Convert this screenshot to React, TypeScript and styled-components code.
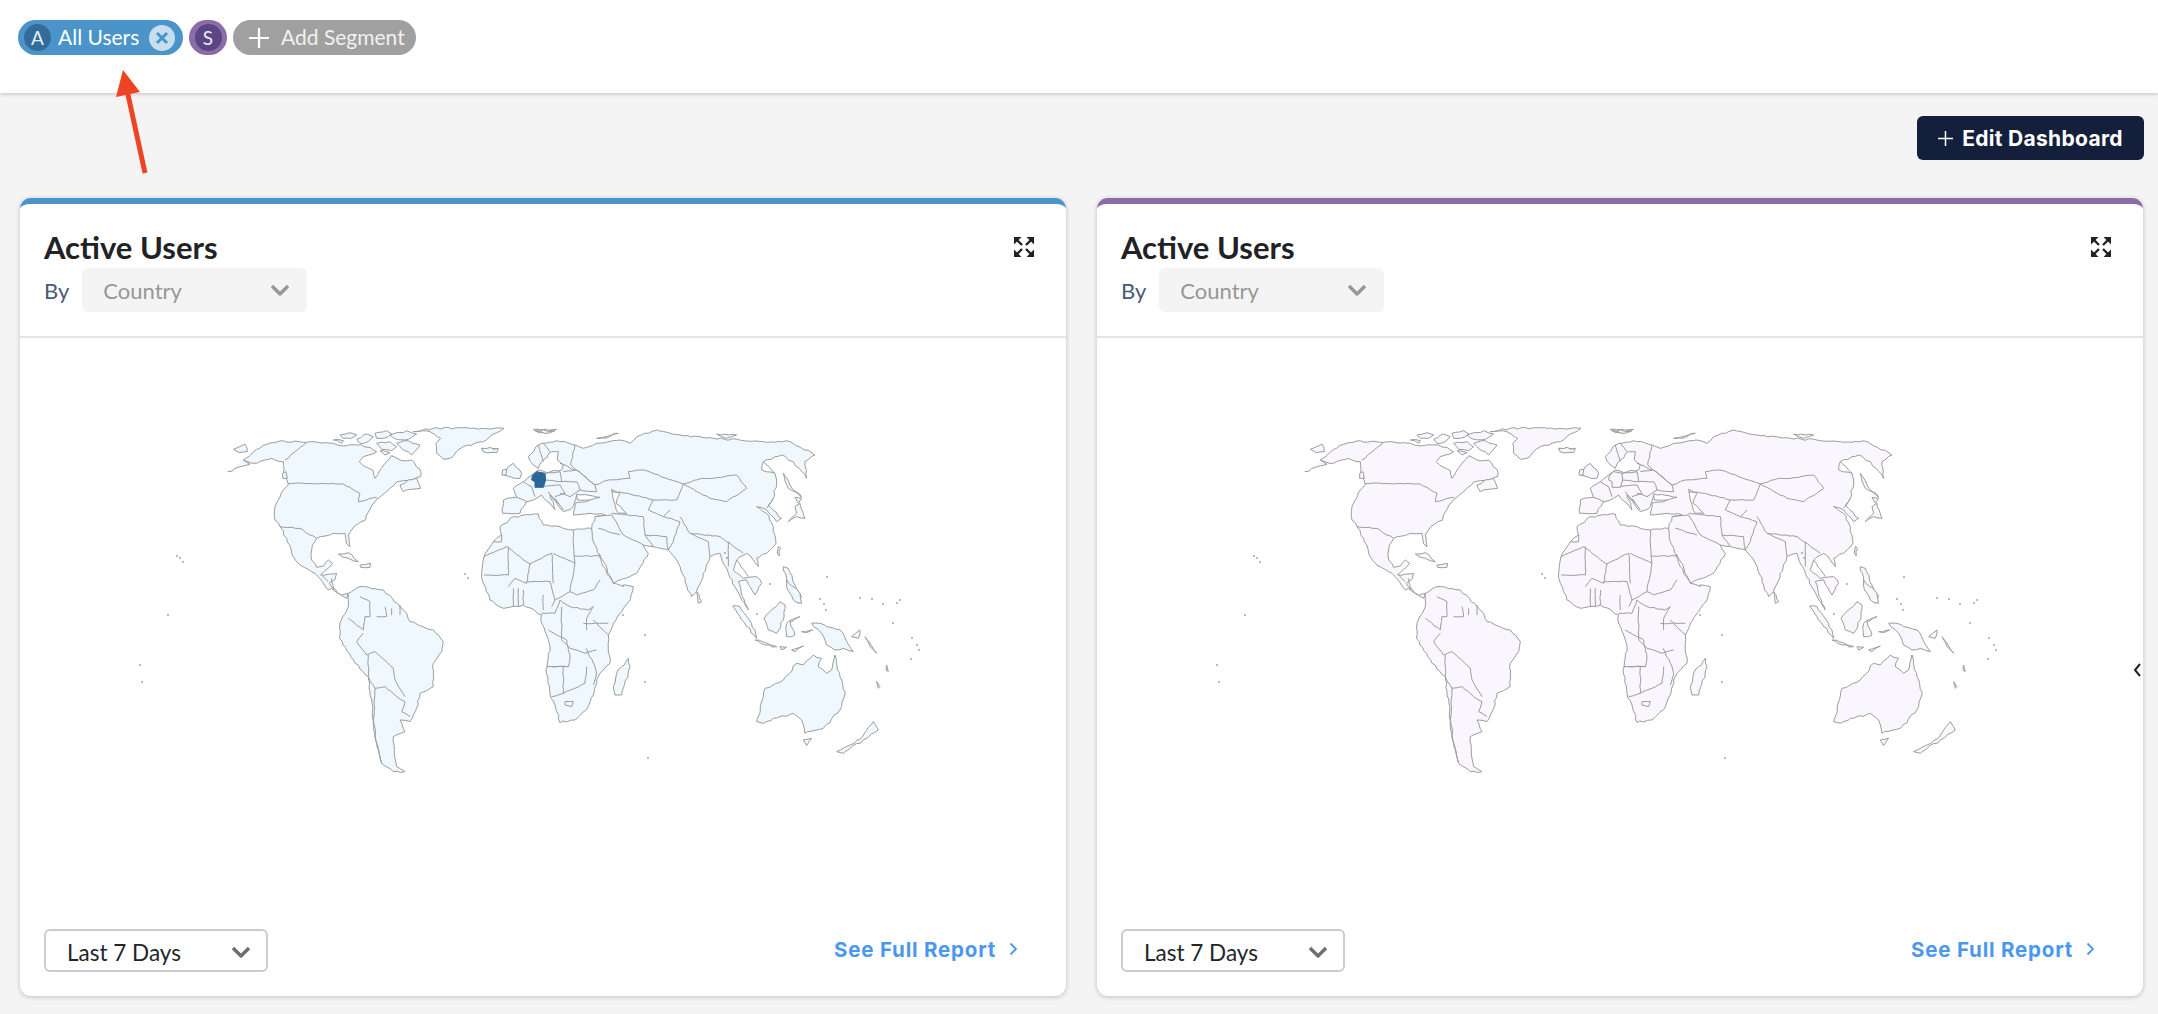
import * as React from 'react'
import styled, { createGlobalStyle } from 'styled-components'

const GlobalStyle = createGlobalStyle`
  html, body {
    margin: 0;
    padding: 0;
    background: #f4f4f4;
    font-family: 'Lato', 'Noto Sans', sans-serif;
    overflow: hidden;
  }
`

const Page = styled.div`
  position: relative;
  width: 2158px;
  height: 1014px;
`

const TopBar = styled.div`
  display: flex;
  align-items: flex-start;
  gap: 6px;
  height: 93px;
  box-sizing: border-box;
  padding: 20px 18px;
  background: #fff;
  box-shadow: 0 1px 4px rgba(0, 0, 0, 0.22);
`

const Pill = styled.div<{ $bg: string }>`
  display: flex;
  align-items: center;
  height: 35px;
  border-radius: 18px;
  background: ${(p) => p.$bg};
  color: #fff;
  font-size: 21px;
  box-sizing: border-box;
`

const SegmentPill = styled(Pill)`
  width: 165px;
  padding: 0 8px 0 6px;
`

const SegmentCollapsed = styled(Pill)`
  width: 38px;
  justify-content: center;
`

const AddPill = styled(Pill)`
  width: 183px;
  padding-left: 16px;
  color: #f1f1f1;
`

const Initial = styled.span<{ $bg: string }>`
  display: flex;
  align-items: center;
  justify-content: center;
  width: 27px;
  height: 27px;
  border-radius: 50%;
  background: ${(p) => p.$bg};
  color: #e8eef4;
  font-size: 19px;
`

const PillLabel = styled.span`
  flex: 1;
  margin-left: 7px;
  padding-bottom: 2px;
`

const CloseDot = styled.span`
  display: flex;
  align-items: center;
  justify-content: center;
  width: 26px;
  height: 26px;
  border-radius: 50%;
  background: #c7deef;
`

const AddLabel = styled.span`
  margin-left: 12px;
  padding-bottom: 2px;
`

const Toolbar = styled.div`
  display: flex;
  justify-content: flex-end;
  padding: 23px 14px 38px 0;
`

const EditButton = styled.button`
  display: flex;
  align-items: center;
  justify-content: center;
  gap: 9px;
  width: 227px;
  height: 44px;
  border: none;
  border-radius: 6px;
  background: #141f3b;
  color: #fff;
  font-family: 'Inter', sans-serif;
  font-size: 21px;
  font-weight: 700;
  letter-spacing: 0.3px;
`

const Cards = styled.div`
  display: flex;
  gap: 31px;
  padding-left: 20px;
`

const Card = styled.section<{ $accent: string }>`
  display: flex;
  flex-direction: column;
  width: 1046px;
  height: 798px;
  box-sizing: border-box;
  border-top: 6px solid ${(p) => p.$accent};
  border-radius: 11px;
  background: #fff;
  box-shadow: 0 1px 5px rgba(0, 0, 0, 0.22);
`

const CardHeader = styled.header`
  display: flex;
  justify-content: space-between;
  height: 134px;
  box-sizing: border-box;
  padding: 24px 32px 0 24px;
  border-bottom: 2px solid #e4e4e4;
`

const Title = styled.h2`
  margin: 0;
  color: #212226;
  font-size: 31px;
  line-height: 38px;
  font-weight: 700;
`

const ByRow = styled.div`
  display: flex;
  align-items: center;
  gap: 13px;
  margin-top: 2px;
  color: #4a5a75;
  font-size: 22px;
`

const SelectBox = styled.div`
  display: flex;
  align-items: center;
  justify-content: space-between;
  width: 225px;
  height: 44px;
  box-sizing: border-box;
  padding: 0 17px 0 21px;
  border-radius: 6px;
  background: #f4f4f4;
  color: #979797;
  font-size: 22px;
`

const ExpandIcon = styled.svg`
  width: 20px;
  height: 20px;
  margin-top: 9px;
`

const MapFrame = styled.svg`
  display: block;
  flex: 1;
  width: 100%;
  min-height: 0;
`

const CardFooter = styled.footer`
  display: flex;
  align-items: flex-start;
  justify-content: space-between;
  height: 67px;
  padding: 0 48px 0 24px;
`

const RangeSelect = styled.div`
  display: flex;
  align-items: center;
  justify-content: space-between;
  width: 224px;
  height: 43px;
  box-sizing: border-box;
  padding: 3px 15px 0 21px;
  border: 2px solid #c9ccd8;
  border-radius: 6px;
  color: #24252a;
  font-size: 22.500px;
`

const ReportLink = styled.a`
  display: flex;
  align-items: center;
  gap: 13px;
  height: 40px;
  color: #4a98ee;
  font-family: 'Inter', sans-serif;
  font-size: 20.500px;
  font-weight: 700;
  letter-spacing: 0.8px;
`

const Annotation = styled.svg`
  position: absolute;
  left: 100px;
  top: 60px;
  width: 60px;
  height: 120px;
`

const EdgeChevron = styled.svg`
  position: absolute;
  left: 2132px;
  top: 662px;
  width: 10px;
  height: 16px;
`

const Dropdown: React.FC<{ color: string; size?: number }> = ({ color, size = 20 }) => (
  <svg width={size} height={size * 0.7} viewBox="0 0 20 14">
    <path d="M2 3l8 8 8-8" fill="none" stroke={color} strokeWidth="3.4" strokeLinejoin="round" />
  </svg>
)

// the coastlines are traced coarse, this breaks long segments into a ragged line
const rough = (d: string, amp: number, seedStart: number) => {
  let seed = seedStart
  const next = () => {
    seed = (seed * 9301 + 49297) % 233280
    return seed / 233280 - 0.5
  }
  let out = ''
  let px = 0
  let py = 0
  let sx = 0
  let sy = 0
  const walk = (x: number, y: number) => {
    const steps = Math.max(1, Math.floor(Math.hypot(x - px, y - py) / 11))
    for (let i = 1; i < steps; i++) {
      const t = i / steps
      out += `L${(px + (x - px) * t + next() * amp).toFixed(1)} ${(py + (y - py) * t + next() * amp).toFixed(1)}`
    }
    out += `L${x} ${y}`
    px = x
    py = y
  }
  for (const m of d.matchAll(/([MLZ])([^MLZ]*)/g)) {
    const [x, y] = m[2].trim().split(/\s+/).map(Number)
    if (m[1] === 'M') {
      out += `M${x} ${y}`
      px = sx = x
      py = sy = y
    } else if (m[1] === 'L') {
      walk(x, y)
    } else {
      walk(sx, sy)
      out += 'Z'
    }
  }
  return out
}

// z3 block: 3x around (200,410), z4 block: 3x around (480,410)
const AMERICAS = [
  'M83 185L130 168L150 163L130 150L148 138L170 118L200 103L240 93L320 97L400 100L430 108L470 105L510 112L530 125L490 140L478 155L500 172L520 182L525 205L540 180L555 160L575 137L600 150L635 150L660 178L662 200L640 208L610 212L590 216L565 240L530 268L510 298L497 330L462 350L445 375L450 410L440 402L435 370L400 370L350 385L335 420L335 450L350 472L370 468L385 450L398 460L380 478L362 495L410 490L405 508L388 520L412 548L440 565L445 550L425 555L395 535L385 540L345 490L300 465L280 440L260 385L240 350L225 330L225 290L250 240L265 225L255 200L250 155L215 145L170 160L130 150',
  // South America
  'M445 550L480 530L550 540L620 610L630 635L700 660L730 695L725 725L700 760L700 830L660 850L650 895L630 935L600 930L615 965L580 980L585 1045L590 1070L615 1085L580 1085L545 1060L530 1000L505 800L465 760L418 685L420 640L445 590Z',
  // Greenland
  'M640 65L700 55L912 55L880 72L850 95L790 110L750 145L730 148L710 130L708 100L722 85L690 65Z',
  // Arctic islands
  'M420 75L450 68L470 75L455 85L430 85Z',
  'M470 88L500 72L520 80L505 95L480 100Z',
  'M525 70L560 62L575 72L550 85L530 85Z',
  'M570 75L620 62L650 72L625 88L590 88Z',
  'M590 100L625 92L660 105L635 135L610 120Z',
  'M530 100L570 95L590 110L575 122L545 118Z',
  'M540 122L570 128L555 135Z',
  'M400 90L430 92L425 100Z',
  'M600 225L625 210L650 205L662 235L635 238L610 245Z',
  'M845 115L892 115L885 128L850 125Z',
  'M415 432L445 428L475 455L445 445Z',
  'M480 465L512 460L510 472L482 472Z',
  'M100 118L135 102L142 125L118 128Z',
  'M248 190L258 185L262 205L248 205Z',
  'M1000 58L1070 58L1040 68L1015 68Z',
]

const AMERICA_BORDERS = [
  'M255 150L320 97',
  'M265 220L430 222L480 250L475 275L530 262',
  'M240 350L300 355L330 375L350 385',
  'M365 495L385 515M395 505L400 540',
  'M445 625L490 660L495 620L510 620L510 575L480 560',
  'M490 670L470 695L500 735L525 725L580 775L585 810L615 860',
  'M505 735L505 800L525 835L555 830L590 860L615 875L605 905L630 920',
  'M525 835L520 950L545 1060',
  'M555 590L560 620L530 620M575 595L575 615M600 585L600 615',
]

const OLD_WORLD = [
  // Africa
  'M100 320L175 312L190 345L240 350L280 360L335 355L345 395L370 470L400 520L460 530L452 565L400 640L385 675L390 760L355 800L340 855L325 890L285 930L240 938L225 885L210 850L198 780L210 710L200 675L185 640L185 615L130 585L70 595L30 570L10 520L5 490L12 440L40 395L65 375L60 350Z',
  // Eurasia
  'M68 310L70 270L110 262L100 235L130 215L155 195L175 180L200 188L245 180L250 165L232 150L235 125L215 125L190 150L175 175L160 165L145 140L175 105L230 92L285 105L310 115L350 100L420 90L450 100L470 80L530 60L600 75L700 85L850 95L930 95L1005 135L975 155L980 205L940 155L905 135L850 155L845 180L885 190L890 210L880 265L865 285L905 325L890 335L860 300L830 290L860 310L880 350L888 400L860 430L830 445L835 470L800 430L770 450L760 480L790 505L830 500L845 520L825 555L800 510L775 515L795 580L805 600L770 540L745 490L720 430L690 440L650 545L635 560L590 450L565 420L520 410L490 405L505 430L470 490L400 520L360 435L340 395L335 355L345 320L375 315L330 310L280 315L285 280L330 270L290 255L280 290L250 305L210 255L225 300L185 255L170 265L140 275L120 310Z',
  // UK, Ireland, Iceland
  'M70 195L85 170L100 160L125 190L120 205L90 200Z',
  'M68 180L80 178L78 195L66 195Z',
  'M5 115L55 115L50 128L10 125Z',
  // Japan, Sakhalin, Sri Lanka, Taiwan
  'M925 335L950 320L975 325L960 280L945 290L950 310Z',
  'M945 262L965 265L955 280Z',
  'M910 190L930 225L965 262L925 235Z',
  'M650 545L665 575L655 580Z',
  'M895 410L902 415L898 438L892 430Z',
  'M910 470L925 475L945 525L965 560L955 580L925 535Z',
  // Arctic Russia
  'M350 85L415 70L375 85Z',
  'M710 72L770 75L740 85Z',
  'M165 62L225 62L195 70Z',
  // Madagascar
  'M445 745L450 770L425 855L405 855L400 830L410 790Z',
  // Australia, New Zealand, New Guinea, islands
  'M830 935L850 860L855 835L910 810L950 760L970 765L1000 735L1025 745L1015 770L1040 790L1055 780L1065 735L1080 800L1095 855L1080 900L1030 955L975 970L965 930L940 910L880 925L850 940Z',
  'M970 990L995 985L980 1007Z',
  'M1070 1025L1140 988L1180 935L1195 960L1150 990L1090 1030Z',
  'M995 640L1020 640L1040 650L1080 660L1120 725L1090 715L1065 720L1040 705L1025 670Z',
  'M852 625L900 575L915 585L910 630L890 670L865 660Z',
  'M758 588L780 590L825 660L830 685L800 650Z',
  'M825 690L890 710L855 705Z',
  'M920 640L960 620L930 635L945 675L920 680Z',
  'M920 510L960 550L965 580L940 570L920 530Z',
  'M965 665L998 660L980 668Z',
  'M900 710L920 712L905 720Z',
  'M935 720L970 708L945 725Z',
  'M1115 680L1140 660L1135 685Z',
  'M1155 680L1190 730L1170 710Z',
  'M1220 765L1225 785L1218 780Z',
  'M1190 815L1200 830L1195 835Z',
]

const OLD_WORLD_BORDERS = [
  // Africa
  'M65 375L65 395L40 395M12 440L80 410L150 462L215 430L220 520M85 495L12 495M85 410L85 495',
  'M150 462L140 520L105 505L85 530M140 515L210 515L225 570M280 360L282 435L285 460L220 430',
  'M282 438L358 438M285 460L270 545L290 555L340 540L360 510M270 545L225 570L215 590',
  'M130 585L130 540M100 590L100 535M115 590L115 535M190 555L190 600',
  'M185 610L225 610L240 570L270 590L325 600L340 590M340 590L320 625L320 660M245 590L245 690L270 715L315 730',
  'M205 660L260 690L270 745L265 770L215 770M340 630L385 675M310 640L385 640M315 730L350 720M200 770L265 770',
  'M250 770L250 850L215 860M250 850L315 820L320 770M318 715L345 770L350 790L340 825',
  'M255 875L280 875L275 890L255 885Z',
  // Europe
  'M110 262L140 275M130 215L155 230L165 260M195 190L240 185L245 215L195 210M190 230L240 225L255 250L225 260',
  'M245 215L290 215L300 240L270 260L240 250M250 185L290 180L345 225L350 245L300 240',
  'M240 160L285 180M225 265L250 300M205 245L240 285',
  'M175 105L190 155M190 100L210 125',
  // Asia
  'M285 105L272 165L345 225L385 210L450 205L445 185L490 180L610 222L690 265L740 275L800 235L770 195L700 205L665 205L610 222',
  'M395 245L445 250L520 270L590 270L610 222',
  'M520 270L505 300L550 320L570 300',
  'M395 310L490 320L495 375L520 410M495 375L560 380L565 420',
  'M550 320L600 335L580 395L565 420',
  'M600 320L630 370L720 380L790 430M630 370L685 395L690 440',
  'M345 320L395 315L430 375L490 405M355 355L420 375',
  'M850 155L885 190M880 265L860 295',
  'M745 395L745 470M770 450L805 500',
]

const OLD_WORLD_SEAS = [
  'M395 238L420 250L408 280L440 310L415 310L400 270Z',
  'M290 252L360 262L330 270L292 270Z',
]

const DOTS: [number, number][] = [
  [180, 558], [177, 556], [183, 562], [168, 615], [140, 665], [142, 682], [648, 758],
  [827, 577], [465, 574], [468, 578], [770, 584], [725, 553], [727, 558], [757, 614],
  [826, 610], [824, 604], [645, 635], [645, 682], [820, 599], [860, 598], [872, 599],
  [883, 604], [897, 603], [900, 600], [893, 623], [912, 638], [917, 645], [919, 650],
  [911, 659], [623, 586], [623, 615],
]

const roughAll = (list: string[], amp: number) => list.map((d, i) => rough(d, amp, 17 + i * 31))

const AMERICAS_D = roughAll(AMERICAS, 6)
const AMERICA_BORDERS_D = roughAll(AMERICA_BORDERS, 3)
const OLD_WORLD_D = roughAll(OLD_WORLD, 6)
const OLD_WORLD_BORDERS_D = roughAll(OLD_WORLD_BORDERS, 3)
const OLD_WORLD_SEAS_D = roughAll(OLD_WORLD_SEAS, 4)

const WorldMap: React.FC<{ land: string; dark?: string }> = ({ land, dark }) => {
  const outline = { fill: land, stroke: '#9c9c9c', strokeWidth: 1, vectorEffect: 'non-scaling-stroke' as const }
  const line = { ...outline, fill: 'none' }
  return (
    <MapFrame viewBox="20 338 1046 591">
      <g transform="translate(200 410) scale(0.3333)">
        {AMERICAS_D.map((d) => <path key={d} d={d} {...outline} />)}
        {AMERICA_BORDERS_D.map((d) => <path key={d} d={d} {...line} />)}
      </g>
      <g transform="translate(480 410) scale(0.3333)">
        {OLD_WORLD_D.map((d) => <path key={d} d={d} {...outline} />)}
        {OLD_WORLD_SEAS_D.map((d) => <path key={d} d={d} {...outline} fill="#fff" />)}
        {OLD_WORLD_BORDERS_D.map((d) => <path key={d} d={d} {...line} />)}
        <path
          d="M157 197L170 185L195 190L197 210L190 232L165 232L165 215L155 210Z"
          fill={dark || land}
          stroke={dark || '#9c9c9c'}
          vectorEffect="non-scaling-stroke"
        />
      </g>
      {DOTS.map(([x, y]) => <circle key={`${x}-${y}`} cx={x} cy={y} r="0.9" fill="#9c9c9c" />)}
    </MapFrame>
  )
}

const ReportCard: React.FC<{ accent: string; land: string; dark?: string }> = ({ accent, land, dark }) => (
  <Card $accent={accent}>
    <CardHeader>
      <div>
        <Title>Active Users</Title>
        <ByRow>
          By
          <SelectBox>
            Country
            <Dropdown color="#979797" />
          </SelectBox>
        </ByRow>
      </div>
      <ExpandIcon viewBox="0 0 20 20">
        <path d="M0 0h7.500L0 7.500zM20 0v7.500L12.500 0zM0 20v-7.500L7.500 20zM20 20h-7.500L20 12.500z" fill="#222" />
        <path d="M3 3l5 5M17 3l-5 5M3 17l5-5M17 17l-5-5" stroke="#222" strokeWidth="2.400" />
      </ExpandIcon>
    </CardHeader>
    <WorldMap land={land} dark={dark} />
    <CardFooter>
      <RangeSelect>
        Last 7 Days
        <Dropdown color="#6e6e6e" />
      </RangeSelect>
      <ReportLink>
        See Full Report
        <svg width="9" height="14" viewBox="0 0 9 14">
          <path d="M1.500 1.500L7 7l-5.500 5.500" fill="none" stroke="#4a98ee" strokeWidth="1.800" />
        </svg>
      </ReportLink>
    </CardFooter>
  </Card>
)

const App: React.FC = () => {
  return (
    <Page>
      <GlobalStyle />
      <TopBar>
        <SegmentPill $bg="#4a94ca">
          <Initial $bg="#326c9a">A</Initial>
          <PillLabel>All Users</PillLabel>
          <CloseDot>
            <svg width="14" height="14" viewBox="0 0 14 14">
              <path d="M2 2l10 10M12 2L2 12" stroke="#4a94ca" strokeWidth="3" />
            </svg>
          </CloseDot>
        </SegmentPill>
        <SegmentCollapsed $bg="#8a6ca8">
          <Initial $bg="#5c4583">S</Initial>
        </SegmentCollapsed>
        <AddPill $bg="#a0a0a0">
          <svg width="20" height="20" viewBox="0 0 20 20">
            <path d="M10 0v20M0 10h20" stroke="#fff" strokeWidth="2.200" />
          </svg>
          <AddLabel>Add Segment</AddLabel>
        </AddPill>
      </TopBar>
      <Toolbar>
        <EditButton>
          <svg width="15" height="15" viewBox="0 0 15 15">
            <path d="M7.500 0v15M0 7.500h15" stroke="#fff" strokeWidth="1.500" />
          </svg>
          Edit Dashboard
        </EditButton>
      </Toolbar>
      <Cards>
        <ReportCard accent="#4a94ca" land="#eff8fe" dark="#2a6798" />
        <ReportCard accent="#8a6ca8" land="#f9f6fd" />
      </Cards>
      <Annotation viewBox="0 0 60 120">
        <path d="M45 113L27 30" stroke="#ee4423" strokeWidth="5" fill="none" />
        <path d="M23 10L16 37L40 32Z" fill="#ee4423" />
      </Annotation>
      <EdgeChevron viewBox="0 0 10 16">
        <path d="M8 2L3 8l5 6" fill="none" stroke="#222" strokeWidth="2" />
      </EdgeChevron>
    </Page>
  )
}

export default App
